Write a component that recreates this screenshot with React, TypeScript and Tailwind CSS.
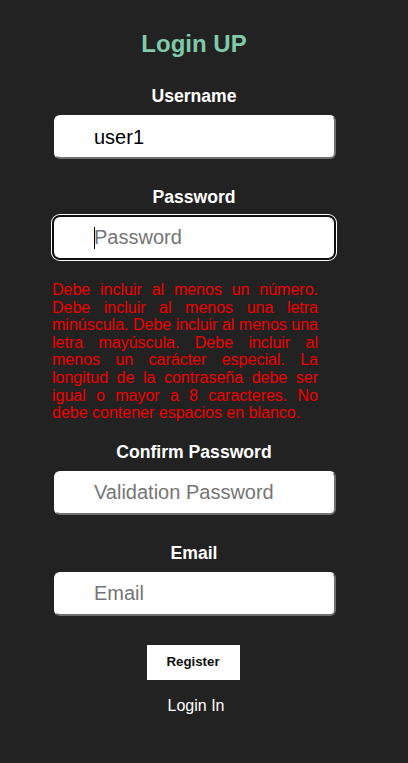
import React, { useState } from 'react';

const inputBase =
  'block h-[44px] bg-white text-[20px] text-black placeholder:text-[#757575] outline-none font-[Liberation_Sans,Arial,sans-serif]';

export default function App() {
  const [username, setUsername] = useState('user1');
  const [password, setPassword] = useState('');
  const [confirm, setConfirm] = useState('');
  const [email, setEmail] = useState('');

  return (
    <div className="min-h-[763px] w-full bg-[#222222] font-[Liberation_Sans,Arial,sans-serif]">
      <div className="w-[388px] flex flex-col items-center pt-[30px]">
        <h1 className="text-[24px] leading-[28px] font-bold text-[#80caa9]">Login UP</h1>

        <form className="w-[284px] flex flex-col items-center" onSubmit={(e) => e.preventDefault()}>
          <label className="mt-[28px] text-[17.6px] leading-[20px] font-bold text-white">Username</label>
          <input
            value={username}
            onChange={(e) => setUsername(e.target.value)}
            className={`${inputBase} mt-[9px] w-[282px] self-end pl-[38px] rounded-[6px] border-2 border-t-white border-l-white border-r-[#6f6f6f] border-b-[#6f6f6f]`}
          />

          <label className="mt-[28px] text-[17.6px] leading-[20px] font-bold text-white">Password</label>
          <div className="relative mt-[8px] w-[284px]">
            <input
              type="password"
              value={password}
              placeholder="Password"
              onChange={(e) => setPassword(e.target.value)}
              className={`${inputBase} h-[45px] w-full pl-[40px] rounded-[8px] border-2 border-[#101010] shadow-[0_0_0_1px_#ffffff]`}
            />
            {/* caret */}
            {password === '' && (
              <span className="absolute left-[42px] top-[12px] h-[22px] w-px bg-black" />
            )}
          </div>

          <p className="mt-[21px] w-[266px] self-start text-justify text-[16px] leading-[17.6px] text-[#f00000]">
            Debe incluir al menos un número. Debe incluir al menos una letra minúscula. Debe incluir al menos una
            letra mayúscula. Debe incluir al menos un carácter especial. La longitud de la contraseña debe ser igual
            o mayor a 8 caracteres. No debe contener espacios en blanco.
          </p>

          <label className="mt-[20px] text-[17.6px] leading-[20px] font-bold text-white">Confirm Password</label>
          <input
            type="password"
            value={confirm}
            placeholder="Validation Password"
            onChange={(e) => setConfirm(e.target.value)}
            className={`${inputBase} mt-[9px] w-[282px] self-end pl-[38px] rounded-[6px] border-2 border-t-white border-l-white border-r-[#6f6f6f] border-b-[#6f6f6f]`}
          />

          <label className="mt-[28px] text-[17.6px] leading-[20px] font-bold text-white">Email</label>
          <input
            type="email"
            value={email}
            placeholder="Email"
            onChange={(e) => setEmail(e.target.value)}
            className={`${inputBase} mt-[9px] w-[282px] self-end pl-[38px] rounded-[6px] border-2 border-t-white border-l-white border-r-[#6f6f6f] border-b-[#6f6f6f]`}
          />

          <button
            type="submit"
            className="mt-[29px] mr-[2px] h-[35px] w-[93px] bg-white text-[13.3px] font-bold text-[#111]"
          >
            Register
          </button>

          <a className="mt-[17px] ml-[4px] text-[16px] leading-[18px] text-white cursor-pointer">Login In</a>
        </form>
      </div>
    </div>
  );
}
